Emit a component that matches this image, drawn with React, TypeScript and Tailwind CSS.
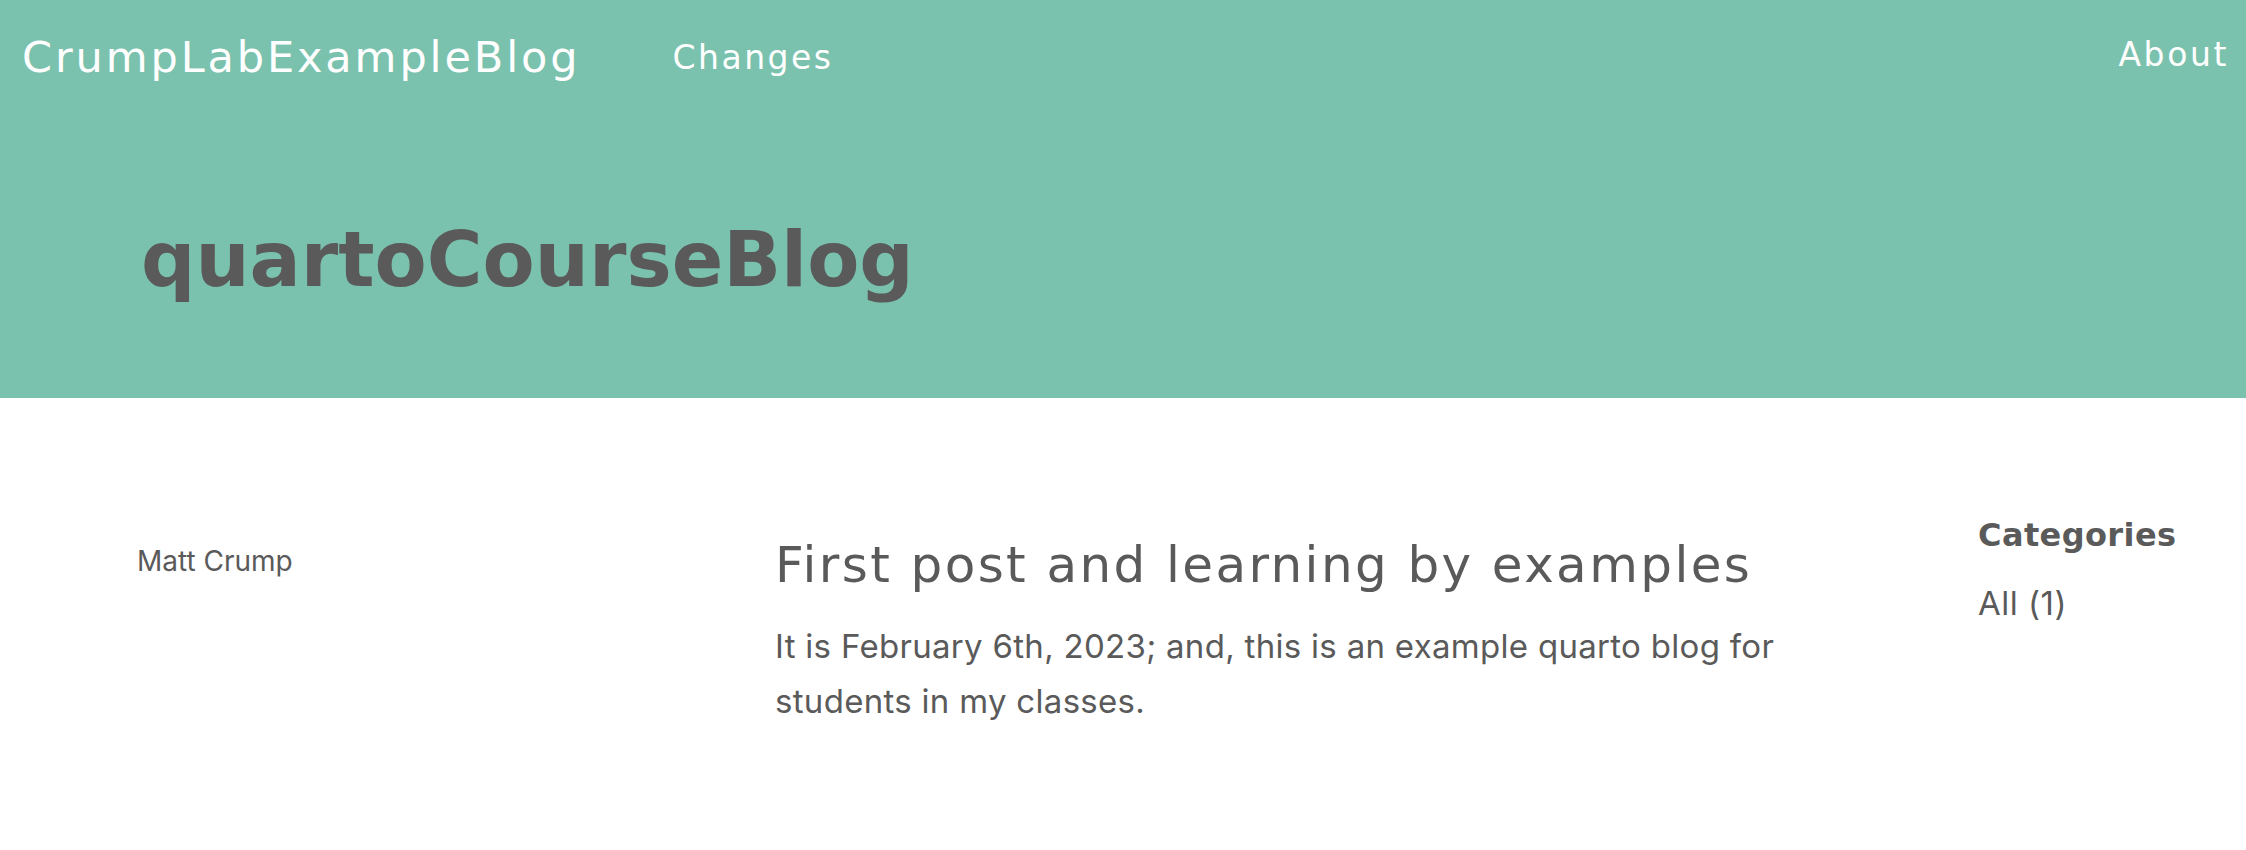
export default function App() {
  const heading = "font-['DejaVu_Sans',sans-serif]";
  const body = "font-['Inter',sans-serif]";

  return (
    <div className={`min-h-[850px] bg-white text-[#5a5a5a] ${body}`}>
      <header className="h-[398px] bg-[#7bc2ae]">
        <nav className="flex h-[114px] items-center pl-[22px] pr-[17px] text-white">
          <a className={`${heading} text-[43px] tracking-[2.9px]`}>CrumpLabExampleBlog</a>
          <a className={`${heading} ml-[92px] mt-[2px] text-[33px] tracking-[2.5px]`}>Changes</a>
          <a className={`${heading} ml-auto -mt-[4px] text-[33px] tracking-[2.6px]`}>About</a>
        </nav>
        <div className="pl-[141px] pt-[108px]">
          <h1 className={`${heading} text-[76px] font-bold leading-none`}>quartoCourseBlog</h1>
        </div>
      </header>

      <main className="flex pl-[137px] pt-[130px]">
        <div className="w-[638px] pt-[12px] text-[28px]">Matt Crump</div>
        <div className="w-[1040px] pt-[6px]">
          <h3 className={`${heading} text-[50px] leading-tight tracking-[2.4px]`}>
            First post and learning by examples
          </h3>
          <p className="mt-[22px] text-[33px] leading-[55px] tracking-[0.3px]">
            It is February 6th, 2023; and, this is an example quarto blog for students in my classes.
          </p>
        </div>
        <aside className="ml-auto w-[268px] -mt-[17px]">
          <h5 className={`${heading} text-[32px] font-bold tracking-[0.4px]`}>Categories</h5>
          <div className="mt-[20px] text-[33px] tracking-[0.5px]">All (1)</div>
        </aside>
      </main>
    </div>
  );
}
